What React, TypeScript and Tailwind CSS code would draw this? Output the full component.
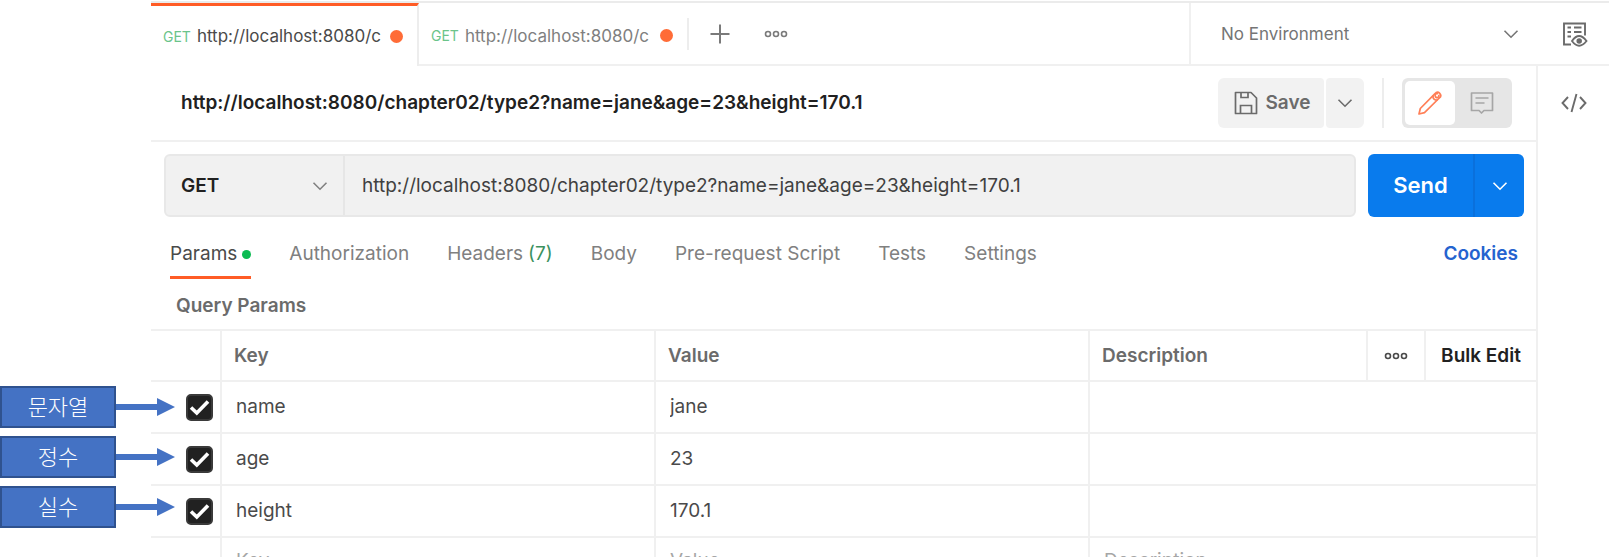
import React, { useState } from 'react';
import clsx from 'clsx';

type Param = {
  name: string;
  value: string;
};

const requestUrl = 'http://localhost:8080/chapter02/type2?name=jane&age=23&height=170.1';

const openTabs = [
  { id: 1, method: 'GET', title: requestUrl },
  { id: 2, method: 'GET', title: requestUrl },
];

const sections = ['Params', 'Authorization', 'Headers', 'Body', 'Pre-request Script', 'Tests', 'Settings'];

const params: Param[] = [
  { name: 'name', value: 'jane' },
  { name: 'age', value: '23' },
  { name: 'height', value: '170.1' },
];

const notes = ['문자열', '정수', '실수'];

// Tabs only have room for the start of the url
const shortTitle = (title: string) => title.slice(0, 23);

function ChevronIcon({ className }: { className?: string }) {
  return (
    <svg viewBox="0 0 16 16" className={clsx('h-4 w-4 shrink-0', className)} fill="none" stroke="currentColor" strokeWidth="1.6" aria-hidden="true">
      <path d="M1.5 4.7 8 11.2l6.500-6.500" />
    </svg>
  );
}

function DotsIcon({ className }: { className?: string }) {
  return (
    <svg viewBox="0 0 24 8" className={clsx('h-2 w-6', className)} fill="none" stroke="currentColor" strokeWidth="1.6" aria-hidden="true">
      <circle cx="4" cy="4" r="2.500" />
      <circle cx="12" cy="4" r="2.500" />
      <circle cx="20" cy="4" r="2.500" />
    </svg>
  );
}

function PlusIcon() {
  return (
    <svg viewBox="0 0 20 20" className="h-5 w-5" stroke="currentColor" strokeWidth="2" aria-hidden="true">
      <path d="M10 .5v19M.5 10h19" />
    </svg>
  );
}

function SaveIcon() {
  return (
    <svg viewBox="0 0 24 24" className="h-6 w-6" fill="none" stroke="currentColor" strokeWidth="1.700" aria-hidden="true">
      <path d="M1.500 1.500h15.500l5.500 5.500v15.500h-21z" strokeLinejoin="round" />
      <path d="M7 1.500v5h7v-5M6.500 22.500v-8h11v8" />
    </svg>
  );
}

function PencilIcon() {
  return (
    <svg viewBox="0 0 24 24" className="h-6 w-6" fill="none" stroke="currentColor" strokeWidth="1.700" strokeLinejoin="round" aria-hidden="true">
      <path d="M1 23 2.300 17.500 16.500 3.200 18.200 1.500q1.800-1 3.500.8t.8 3.500L20.800 7.500 6.500 21.700z" />
      <path d="M15.200 4.500q-.7 2.300.8 3.700t3.600.6M20 2.800q-1.800-.6-2.600.6t.2 2.600q1.600 1.200 2.700.2t.5-2.500" />
    </svg>
  );
}

function CommentIcon() {
  return (
    <svg viewBox="0 0 24 24" className="h-6 w-6" fill="none" stroke="currentColor" strokeWidth="1.700" aria-hidden="true">
      <path d="M1.500 2h21v17.500h-8.500l-2.500 2.500-2.500-2.500h-7.500z" strokeLinejoin="round" />
      <path d="M5.500 7h13M5.500 12h9" />
    </svg>
  );
}

function EnvironmentIcon() {
  return (
    <svg viewBox="0 0 26 26" className="h-[26px] w-[26px]" fill="none" stroke="currentColor" strokeWidth="1.900" aria-hidden="true">
      <path d="M9 23.500H2v-21h21v12" />
      <path d="M5.500 6.500H9M12 6.500h7.500M5.500 11H9M12 11h7.500M5.500 15.500H9" />
      <path d="M10 20q7-10 14.500 0-7.500 9.500-14.500 0z" />
      <circle cx="17.200" cy="20" r="1.800" fill="currentColor" />
    </svg>
  );
}

function CodeIcon() {
  return (
    <svg viewBox="0 0 26 20" className="h-5 w-[26px]" fill="none" stroke="currentColor" strokeWidth="1.900" aria-hidden="true">
      <path d="M7 4 1.500 10 7 16M19 4l5.500 6-5.500 6M15.500 1l-5 18" />
    </svg>
  );
}

function Note({ text }: { text: string }) {
  return (
    <div className="flex w-[175px] items-center">
      <div className="flex h-[42px] w-[116px] items-center justify-center border-2 border-[#2f528f] bg-[#4472c4] pb-1 font-['Noto_Sans_CJK_KR',sans-serif] text-[22px] leading-none font-light text-white">
        {text}
      </div>
      <svg viewBox="0 0 59 18" className="h-[18px] w-[59px]" fill="#4472c4" aria-hidden="true">
        <path d="M0 6h41V0l18 9-18 9v-6H0z" />
      </svg>
    </div>
  );
}

function TopBar() {
  const [activeTab, setActiveTab] = useState(1);

  return (
    <div className="mt-px flex h-[65px] border-t-2 border-[#ebebeb]">
      {openTabs.map(tab => (
        <button
          key={tab.id}
          onClick={() => setActiveTab(tab.id)}
          className={clsx(
            'flex w-[268px] items-center gap-1.5 pr-[14px] pl-3 text-[17px]',
            tab.id === activeTab
              ? 'border-t-[3px] border-r-2 border-t-[#ff5c26] border-r-[#ededed] text-[#4a4a4a]'
              : 'border-b-2 border-[#f0f0f0] pt-1 text-[#808080]'
          )}
        >
          <span className="text-[14px] text-[#6bc48a]">{tab.method}</span>
          <span className="min-w-0 flex-1 overflow-hidden pt-0.5 text-left whitespace-nowrap">{shortTitle(tab.title)}</span>
          <span className="h-[13px] w-[13px] shrink-0 rounded-full bg-[#ff6c37]" />
        </button>
      ))}
      <div className="flex flex-1 items-center border-b-2 border-[#f0f0f0] text-[#7a7a7a]">
        <div className="h-8 w-0.5 bg-[#ededed]" />
        <button aria-label="New tab" className="ml-[21px]">
          <PlusIcon />
        </button>
        <button aria-label="Tab options" className="ml-[34px]">
          <DotsIcon />
        </button>
      </div>
      <label className="grid w-[347px] items-center border-b-2 border-l-2 border-[#f0f0f0] text-[#757575]">
        <select aria-label="Environment" className="col-start-1 row-start-1 h-full w-full appearance-none pt-0.5 pl-[30px] text-[17px]">
          <option>No Environment</option>
        </select>
        <ChevronIcon className="pointer-events-none col-start-1 row-start-1 mr-[17px] justify-self-end" />
      </label>
      <div className="flex w-[73px] items-center justify-center border-b-2 border-[#f0f0f0] pl-1 text-[#6b6b6b]">
        <button aria-label="Environment quick look">
          <EnvironmentIcon />
        </button>
      </div>
    </div>
  );
}

function TitleRow() {
  return (
    <div className="flex h-[76px] items-center border-b-2 border-[#f0f0f0] pr-6 pl-[30px]">
      <h1 className="flex-1 text-[19px] font-semibold text-[#212121]">{requestUrl}</h1>
      <div className="flex gap-0.5 text-[#6b6b6b]">
        <button className="flex h-[50px] w-[106px] items-center justify-center gap-2 rounded-l-md rounded-r-sm bg-[#f2f2f2] pl-0.5 text-[19px] font-semibold">
          <SaveIcon />
          Save
        </button>
        <button aria-label="Save options" className="flex h-[50px] w-[38px] items-center justify-center rounded-l-sm rounded-r-md bg-[#f2f2f2]">
          <ChevronIcon />
        </button>
      </div>
      <div className="mx-[18px] h-[50px] w-0.5 bg-[#ededed]" />
      <div className="flex h-[50px] w-[110px] rounded-md bg-[#e6e6e6] p-[3px]">
        <button aria-label="Edit" className="flex w-[50px] items-center justify-center rounded-[5px] bg-white text-[#ff7f57]">
          <PencilIcon />
        </button>
        <button aria-label="Comments" className="flex flex-1 items-center justify-center text-[#a6a6a6]">
          <CommentIcon />
        </button>
      </div>
    </div>
  );
}

function UrlBar() {
  return (
    <form className="flex h-[63px] gap-3" onSubmit={e => e.preventDefault()}>
      <div className="flex flex-1 rounded-md border-2 border-[#e8e8e8] bg-[#f1f1f1]">
        <label className="grid w-[179px] items-center border-r-2 border-[#e6e6e6]">
          <select aria-label="Method" className="col-start-1 row-start-1 h-full w-full appearance-none pt-0.5 pl-[15px] text-[19px] font-semibold text-[#212121]">
            <option>GET</option>
            <option>POST</option>
            <option>PUT</option>
            <option>DELETE</option>
          </select>
          <ChevronIcon className="pointer-events-none col-start-1 row-start-1 mr-[15px] justify-self-end text-[#808080]" />
        </label>
        <input aria-label="Request URL" defaultValue={requestUrl} className="min-w-0 flex-1 px-[17px] pt-0.5 text-[19px] text-[#404040]" />
      </div>
      <div className="flex overflow-hidden rounded-md bg-[#097bed] text-white">
        <button type="submit" className="w-[105px] text-[22px] font-semibold">Send</button>
        <button type="button" aria-label="Send options" className="flex w-[51px] items-center justify-center border-l-2 border-[#0a70dc]">
          <ChevronIcon />
        </button>
      </div>
    </form>
  );
}

function SectionTabs() {
  const [active, setActive] = useState('Params');

  return (
    <nav className="mt-[14px] flex h-12 gap-[38px] pr-[18px] pl-[19px] text-[19px] text-[#808080]">
      {sections.map(section => (
        <button
          key={section}
          onClick={() => setActive(section)}
          className={clsx(
            'flex items-center gap-[5px] border-b-[3px] pt-0.5 whitespace-nowrap',
            section === active ? 'border-[#ff5c26] text-[#4a4a4a]' : 'border-transparent'
          )}
        >
          {section}
          {section === 'Params' && <span className="h-[9px] w-[9px] rounded-full bg-[#0cbb52]" />}
          {section === 'Headers' && <span className="text-[#3b9160]">(7)</span>}
        </button>
      ))}
      <a href="#cookies" className="ml-auto flex items-center border-b-[3px] border-transparent pt-0.5 font-semibold text-[#2563cf]">
        Cookies
      </a>
    </nav>
  );
}

function ParamRow({ param }: { param: Param }) {
  const [enabled, setEnabled] = useState(true);

  return (
    <tr className="h-[52px] border-b-2 border-[#f0f0f0]">
      <td className="border-r-2 border-[#f0f0f0]">
        <label className="ml-[35px] grid w-[27px]">
          <input
            type="checkbox"
            checked={enabled}
            onChange={e => setEnabled(e.target.checked)}
            aria-label={`Enable ${param.name}`}
            className="col-start-1 row-start-1 h-[27px] w-[27px] appearance-none rounded-[5px] border-2 border-[#3a3a3a] checked:bg-[#212121]"
          />
          {enabled && (
            <svg viewBox="0 0 27 27" className="pointer-events-none col-start-1 row-start-1 h-[27px] w-[27px]" fill="none" stroke="#fff" strokeWidth="3.600" aria-hidden="true">
              <path d="M5 13.500 10.800 19 22 7.500" />
            </svg>
          )}
        </label>
      </td>
      <td className="border-r-2 border-[#f0f0f0] px-[14px]">
        <input aria-label="Key" defaultValue={param.name} className="w-full" />
      </td>
      <td className="border-r-2 border-[#f0f0f0] px-[14px]">
        <input aria-label="Value" defaultValue={param.value} className="w-full" />
      </td>
      <td colSpan={3} className="px-[14px]">
        <input aria-label="Description" className="w-full" />
      </td>
    </tr>
  );
}

function ParamsTable() {
  return (
    <table className="w-full table-fixed border-collapse border-t-2 border-[#f0f0f0] text-[19px] text-[#4a4a4a]">
      <thead>
        <tr className="h-[51px] border-b-2 border-[#f0f0f0] text-left text-[#6b6b6b]">
          <th className="w-[70px] border-r-2 border-[#f0f0f0]" />
          <th className="w-[434px] border-r-2 border-[#f0f0f0] px-3 pt-0.5 font-semibold">Key</th>
          <th className="w-[434px] border-r-2 border-[#f0f0f0] px-3 pt-0.5 font-semibold">Value</th>
          <th className="border-r-2 border-[#f0f0f0] px-3 pt-0.5 font-semibold">Description</th>
          <th className="w-[58px] border-r-2 border-[#f0f0f0] text-[#4a4a4a]">
            <button aria-label="Columns" className="flex w-full justify-center">
              <DotsIcon />
            </button>
          </th>
          <th className="w-[111px] pt-0.5 text-center text-[#212121]">
            <button className="font-semibold whitespace-nowrap">Bulk Edit</button>
          </th>
        </tr>
      </thead>
      <tbody>
        {params.map(param => (
          <ParamRow key={param.name} param={param} />
        ))}
        <tr className="h-12">
          <td className="border-r-2 border-[#f0f0f0]" />
          <td className="border-r-2 border-[#f0f0f0] px-[14px]">
            <input aria-label="New key" placeholder="Key" className="w-full placeholder:text-[#a6a6a6]" />
          </td>
          <td className="border-r-2 border-[#f0f0f0] px-[14px]">
            <input aria-label="New value" placeholder="Value" className="w-full placeholder:text-[#a6a6a6]" />
          </td>
          <td colSpan={3} className="px-[14px]">
            <input aria-label="New description" placeholder="Description" className="w-full placeholder:text-[#a6a6a6]" />
          </td>
        </tr>
      </tbody>
    </table>
  );
}

export default function App() {
  return (
    <div className="flex h-screen overflow-hidden bg-white font-['Inter',sans-serif]">
      {/* Type notes pointing at the param rows */}
      <aside className="z-10 flex w-[151px] shrink-0 flex-col gap-2 pt-[386px]">
        {notes.map(note => (
          <Note key={note} text={note} />
        ))}
      </aside>

      <div className="flex min-w-0 flex-1 flex-col">
        <TopBar />
        <div className="flex min-h-0 flex-1">
          <main className="min-w-0 flex-1">
            <TitleRow />
            <div className="pt-3 pr-3 pl-[13px]">
              <UrlBar />
            </div>
            <SectionTabs />
            <h2 className="flex h-[50px] items-center pt-1 pl-[25px] text-[19px] font-semibold text-[#6b6b6b]">Query Params</h2>
            <ParamsTable />
          </main>

          {/* Right rail */}
          <div className="w-[73px] border-l-2 border-[#f0f0f0] text-[#6b6b6b]">
            <button aria-label="Code" className="flex h-[74px] w-full items-center justify-center">
              <CodeIcon />
            </button>
          </div>
        </div>
      </div>
    </div>
  );
}
